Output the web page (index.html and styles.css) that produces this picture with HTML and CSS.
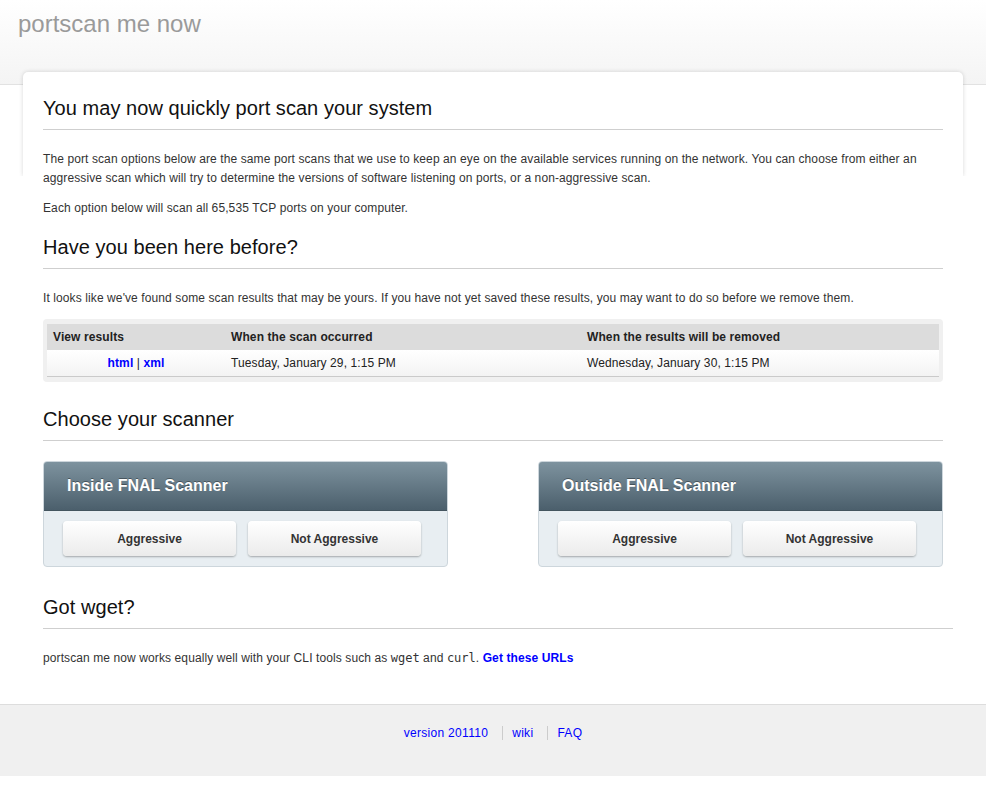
FILE: index.html
```html
<!DOCTYPE html>
<html>
<head>
<meta charset="utf-8">
<title>portscan me now</title>
<link rel="stylesheet" href="styles.css">
</head>
<body>
<header class="top">
  <div class="brand">portscan me now</div>
</header>
<main class="card">
  <h1 class="heading">You may now quickly port scan your system</h1>
  <p class="text first">The port scan options below are the same port scans that we use to keep an eye on the available services running on the network. You can choose from either an aggressive scan which will try to determine the versions of software listening on ports, or a non-aggressive scan.</p>
  <p class="text">Each option below will scan all 65,535 TCP ports on your computer.</p>

  <h2 class="heading section">Have you been here before?</h2>
  <p class="text first">It looks like we've found some scan results that may be yours. If you have not yet saved these results, you may want to do so before we remove them.</p>
  <div class="results">
    <div class="row head">
      <div class="cell">View results</div>
      <div class="cell">When the scan occurred</div>
      <div class="cell">When the results will be removed</div>
    </div>
    <div class="row body">
      <div class="cell center"><a href="#" class="link bold">html</a> | <a href="#" class="link bold">xml</a></div>
      <div class="cell">Tuesday, January 29, 1:15 PM</div>
      <div class="cell">Wednesday, January 30, 1:15 PM</div>
    </div>
  </div>

  <h2 class="heading section">Choose your scanner</h2>
  <div class="scanners">
    <div class="scanner">
      <div class="scanner-title">Inside FNAL Scanner</div>
      <div class="scanner-body">
        <a href="#" class="btn">Aggressive</a>
        <a href="#" class="btn">Not Aggressive</a>
      </div>
    </div>
    <div class="scanner">
      <div class="scanner-title">Outside FNAL Scanner</div>
      <div class="scanner-body">
        <a href="#" class="btn">Aggressive</a>
        <a href="#" class="btn">Not Aggressive</a>
      </div>
    </div>
  </div>

  <h2 class="heading section wide">Got wget?</h2>
  <p class="text first">portscan me now works equally well with your CLI tools such as <code class="mono">wget</code> and <code class="mono">curl</code>. <a href="#" class="link bold">Get these URLs</a></p>
</main>
<footer class="foot">
  <nav class="foot-links">
    <a href="#" class="link">version 201110</a>
    <a href="#" class="link">wiki</a>
    <a href="#" class="link">FAQ</a>
  </nav>
</footer>
</body>
</html>
```

FILE: styles.css
```css
html, body {
  margin: 0;
  padding: 0;
  background: #fff;
}
body {
  font-family: "Liberation Sans", Arial, sans-serif;
  font-size: 12px;
  color: #333;
}
.top {
  height: 84px;
  border-bottom: 1px solid #e2e2e2;
  background: linear-gradient(#ffffff, #f4f4f4);
  box-sizing: content-box;
}
.brand {
  padding: 10px 18px 0;
  font-size: 24px;
  line-height: 28px;
  color: #9a9a9a;
}
.card {
  position: relative;
  z-index: 1;
  display: block;
  width: 900px;
  margin: -13px auto 0;
  padding: 24px 20px 25px;
}
.card::before {
  content: "";
  position: absolute;
  z-index: -1;
  left: 0;
  right: 0;
  top: 0;
  height: 104px;
  background: #fff;
  border-radius: 5px 5px 0 0;
  box-shadow: 0 0 4px rgba(0, 0, 0, 0.16);
  clip-path: inset(-10px -10px 0 -10px);
}
.heading {
  margin: 0 0 20px;
  padding: 0 0 9px;
  font-size: 20px;
  line-height: 24px;
  font-weight: normal;
  color: #111;
  border-bottom: 1px solid #cfcfcf;
  letter-spacing: 0.05px;
}
.section {
  margin-top: 17px;
}
.wide {
  margin-top: 28px;
  margin-right: -10px;
}
.text {
  margin: 0 0 11px;
  line-height: 19px;
  color: #333;
  letter-spacing: 0.1px;
}
.mono {
  font-family: "DejaVu Sans Mono", monospace;
  font-size: 12px;
  color: #333;
  letter-spacing: 0;
}
.link {
  color: #0000ff;
  text-decoration: none;
}
.bold {
  font-weight: bold;
}
.results {
  margin: 11px 0 25px;
  padding: 5px 4px 5px 4px;
  background: #f0f0f0;
  border-radius: 4px;
  letter-spacing: 0.1px;
}
.row {
  display: grid;
  grid-template-columns: 178px 356px 1fr;
  align-items: center;
}
.row.head {
  height: 26px;
  background: #dcdcdc;
  font-weight: bold;
  color: #222;
}
.row.body {
  height: 26px;
  background: linear-gradient(#ffffff, #f3f3f3);
  border-bottom: 1px solid #cacaca;
  color: #222;
}
.cell {
  padding-left: 6px;
}
.cell.center {
  text-align: center;
  padding-left: 0;
}
.scanners {
  display: grid;
  grid-template-columns: 405px 405px;
  justify-content: space-between;
  margin-top: 20px;
}
.scanner {
  border: 1px solid #cdd6dc;
  border-radius: 4px;
  overflow: hidden;
  background: #e8eef2;
}
.scanner-title {
  height: 48px;
  padding-left: 23px;
  display: flex;
  align-items: center;
  background: linear-gradient(#7e939f, #4b5f6c);
  color: #fff;
  font-size: 16px;
  font-weight: bold;
  text-shadow: 0 -1px 0 rgba(0, 0, 0, 0.35);
  border-bottom: 1px solid #44555f;
}
.scanner-body {
  display: flex;
  gap: 12px;
  padding: 10px 19px 10px;
}
.btn {
  width: 173px;
  height: 35px;
  display: flex;
  align-items: center;
  justify-content: center;
  background: linear-gradient(#ffffff, #ebebeb);
  border-radius: 4px;
  box-shadow: 0 1px 2px rgba(0, 0, 0, 0.3);
  color: #333;
  font-weight: bold;
  font-size: 12px;
  text-decoration: none;
}
.foot {
  background: #f0f0f0;
  border-top: 1px solid #dddddd;
  height: 71px;
}
.foot-links {
  display: flex;
  justify-content: center;
  padding-top: 21px;
  line-height: 14px;
  letter-spacing: 0.3px;
}
.foot-links .link {
  padding: 0 14px 0 9px;
  border-left: 1px solid #cccccc;
}
.foot-links .link:first-child {
  border-left: none;
  padding-left: 0;
}
.foot-links .link:last-child {
  padding-right: 0;
}
```
